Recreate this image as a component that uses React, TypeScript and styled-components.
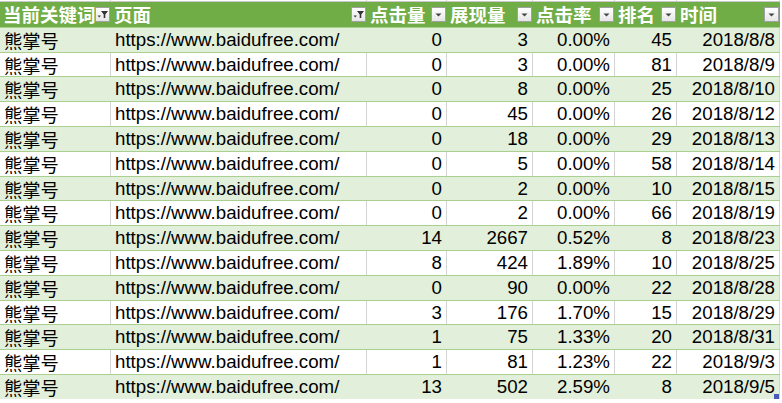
import React from "react";
import styled, { createGlobalStyle } from "styled-components";

const Global = createGlobalStyle`
  html, body { margin: 0; padding: 0; background: #ffffff; }
  body { font-family: "Liberation Sans", "Noto Sans CJK SC", sans-serif; }
`;

const COLS = "111px 256px 80px 86px 82px 62px 103px";

const Sheet = styled.div`
  width: 782px;
  height: 403px;
  overflow: hidden;
  background: #ffffff;
  display: flex;
  flex-direction: column;
`;

const TopStrip = styled.div`
  height: 2px;
  width: 781px;
  display: grid;
  grid-template-columns: ${COLS};
  background: #ffffff;
`;

const StripCell = styled.div`
  border-right: 1px solid #d4d4d4;
  border-bottom: 1px solid #c8c8c8;
`;

const Row = styled.div<{ $band?: boolean; $head?: boolean }>`
  display: grid;
  grid-template-columns: ${COLS};
  width: 780px;
  height: 24.8px;
  box-sizing: border-box;
  background: ${(p) => (p.$head ? "#70ad47" : p.$band ? "#e2efda" : "#ffffff")};
  border-top: ${(p) => (p.$head ? "0" : "1px solid #a9d08e")};
`;

const HeadCell = styled.div`
  position: relative;
  overflow: hidden;
  white-space: nowrap;
  padding-left: 3px;
  color: #ffffff;
  font-family: "Noto Sans CJK SC", sans-serif;
  font-weight: 700;
  font-size: 18.5px;
  line-height: 24px;
`;

const Cell = styled.div<{ $right?: boolean; $band?: boolean; $last?: boolean }>`
  position: relative;
  overflow: hidden;
  white-space: nowrap;
  box-sizing: border-box;
  text-align: ${(p) => (p.$right ? "right" : "left")};
  padding: ${(p) => (p.$right ? "0 4px 0 0" : "0 0 0 4px")};
  border-right: 1px solid ${(p) => (p.$band && !p.$last ? "transparent" : "#d4d4d4")};
  color: #000000;
  font-size: 18.7px;
  line-height: 24px;
`;

const Cjk = styled.span`
  font-family: "Noto Sans CJK SC", sans-serif;
  font-size: 18.3px;
`;

const FilterBtn = styled.span`
  position: absolute;
  right: 1px;
  top: 5px;
  width: 15px;
  height: 15px;
  box-sizing: border-box;
  border: 1px solid #a0a0a0;
  background: linear-gradient(#ffffff, #e6e6e6);
  display: flex;
  align-items: center;
  justify-content: center;
`;

const Handle = styled.span`
  position: absolute;
  right: 0;
  bottom: 0;
  width: 5px;
  height: 5px;
  background: #4a5ab7;
`;

const Arrow = () => (
  <svg width="13" height="13" viewBox="0 0 13 13">
    <path d="M3.5 5.5 L9.5 5.5 L6.5 8.5 Z" fill="#444" />
  </svg>
);

const Funnel = () => (
  <svg width="13" height="13" viewBox="0 0 13 13">
    <path d="M5 3 L12 3 L9.3 6.5 L9.3 10 L7.7 10 L7.7 6.5 Z" fill="#333" />
    <path d="M1.5 7.5 L5 7.5 L3.25 9.5 Z" fill="#444" />
  </svg>
);

type Data = [number, number, string, number, string];
const rows: Data[] = [
  [0, 3, "0.00%", 45, "2018/8/8"],
  [0, 3, "0.00%", 81, "2018/8/9"],
  [0, 8, "0.00%", 25, "2018/8/10"],
  [0, 45, "0.00%", 26, "2018/8/12"],
  [0, 18, "0.00%", 29, "2018/8/13"],
  [0, 5, "0.00%", 58, "2018/8/14"],
  [0, 2, "0.00%", 10, "2018/8/15"],
  [0, 2, "0.00%", 66, "2018/8/19"],
  [14, 2667, "0.52%", 8, "2018/8/23"],
  [8, 424, "1.89%", 10, "2018/8/25"],
  [0, 90, "0.00%", 22, "2018/8/28"],
  [3, 176, "1.70%", 15, "2018/8/29"],
  [1, 75, "1.33%", 20, "2018/8/31"],
  [1, 81, "1.23%", 22, "2018/9/3"],
  [13, 502, "2.59%", 8, "2018/9/5"],
];

const heads: { label: string; funnel?: boolean }[] = [
  { label: "当前关键词", funnel: true },
  { label: "页面", funnel: true },
  { label: "点击量" },
  { label: "展现量" },
  { label: "点击率" },
  { label: "排名" },
  { label: "时间" },
];

export default function App() {
  return (
    <>
      <Global />
      <Sheet>
        <TopStrip>
          {heads.map((h) => (
            <StripCell key={h.label} />
          ))}
        </TopStrip>
        <Row $head>
          {heads.map((h) => (
            <HeadCell key={h.label}>
              {h.label}
              <FilterBtn>{h.funnel ? <Funnel /> : <Arrow />}</FilterBtn>
            </HeadCell>
          ))}
        </Row>
        {rows.map((r, i) => {
          const band = i % 2 === 0;
          const last = i === rows.length - 1;
          return (
            <Row key={i} $band={band}>
              <Cell $band={band}>
                <Cjk>熊掌号</Cjk>
              </Cell>
              <Cell $band={band}>https://www.baidufree.com/</Cell>
              <Cell $band={band} $right>{r[0]}</Cell>
              <Cell $band={band} $right>{r[1]}</Cell>
              <Cell $band={band} $right>{r[2]}</Cell>
              <Cell $band={band} $right>{r[3]}</Cell>
              <Cell $band={band} $right $last>
                {r[4]}
                {last && <Handle />}
              </Cell>
            </Row>
          );
        })}
      </Sheet>
    </>
  );
}
